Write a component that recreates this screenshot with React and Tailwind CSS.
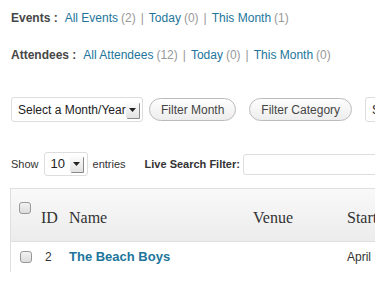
import React from "react";

function Count({ n }) {
  return <span className="ml-[3px] text-[#999]">({n})</span>;
}

function Sep() {
  return <span className="mx-[5px] text-[#999]">|</span>;
}

function Arrow() {
  return (
    <span className="flex h-[16px] w-[13px] shrink-0 items-center justify-center rounded-[1px] bg-gradient-to-b from-[#fdfdfd] to-[#e2e2e2] shadow-[1px_1px_0_#8a8a8a]">
      <svg width="7" height="4" viewBox="0 0 7 4">
        <path d="M0 0 L7 0 L3.5 4 Z" fill="#222" />
      </svg>
    </span>
  );
}

function Pill({ children }) {
  return (
    <button
      type="button"
      className="h-[23px] rounded-full border border-[#bbb] bg-gradient-to-b from-[#fefefe] to-[#ededed] px-[11px] text-[12px] text-[#464646]"
    >
      {children}
    </button>
  );
}

function Checkbox() {
  return (
    <span className="block h-[12px] w-[12px] rounded-[3px] border border-[#999] bg-gradient-to-b from-[#f2f2f2] to-[#dcdcdc]" />
  );
}

export default function App() {
  return (
    <div
      className="h-[288px] w-[375px] overflow-hidden bg-white text-[12px] text-[#333]"
      style={{ fontFamily: '"Liberation Sans", Arial, sans-serif' }}
    >
      <div className="pl-[11px] pt-[10px]">
        {/* event links */}
        <div className="flex h-[16px] items-center whitespace-nowrap">
          <b className="mr-[7px] text-[#464646]">Events :</b>
          <a className="text-[#21759b]">All Events</a>
          <Count n="2" />
          <Sep />
          <a className="text-[#21759b]">Today</a>
          <Count n="0" />
          <Sep />
          <a className="text-[#21759b]">This Month</a>
          <Count n="1" />
        </div>
        <div className="mt-[21px] flex h-[16px] items-center whitespace-nowrap">
          <b className="mr-[7px] text-[#464646]">Attendees :</b>
          <a className="text-[#21759b]">All Attendees</a>
          <Count n="12" />
          <Sep />
          <a className="text-[#21759b]">Today</a>
          <Count n="0" />
          <Sep />
          <a className="text-[#21759b]">This Month</a>
          <Count n="0" />
        </div>

        {/* filters */}
        <div className="mt-[34px] flex items-center whitespace-nowrap">
          <div className="flex h-[25px] w-[132px] shrink-0 items-center justify-between rounded-[3px] border border-[#ddd] bg-white pl-[6px] pr-[4px] text-[12px] text-[#222]">
            <span>Select a Month/Year</span>
            <Arrow />
          </div>
          <div className="ml-[6px]">
            <Pill>Filter Month</Pill>
          </div>
          <div className="ml-[13px]">
            <Pill>Filter Category</Pill>
          </div>
          <div className="ml-[13px] flex h-[25px] w-[120px] shrink-0 items-center rounded-[3px] border border-[#ddd] pl-[6px] text-[#222]">
            Select Category
          </div>
        </div>

        {/* show entries */}
        <div className="mt-[30px] flex items-center whitespace-nowrap text-[11px]">
          <span className="text-[#333]">Show</span>
          <div className="ml-[5px] flex h-[24px] w-[44px] shrink-0 items-center justify-between rounded-[3px] border border-[#ddd] pl-[6px] pr-[4px] text-[13px] text-[#222]">
            <span>10</span>
            <Arrow />
          </div>
          <span className="ml-[5px] text-[#333]">entries</span>
          <b className="ml-[19px] text-[#333]">Live Search Filter:</b>
          <div className="ml-[3px] h-[21px] w-[200px] shrink-0 rounded-[3px] border border-[#ddd] bg-white" />
        </div>
      </div>

      {/* table */}
      <div className="ml-[10px] mt-[12px] w-[420px] border-l border-t border-[#dfdfdf]">
        <div
          className="flex h-[53px] items-center border-b border-[#dfdfdf] bg-gradient-to-b from-[#f9f9f9] to-[#ececec] pt-[5px] text-[16px] text-[#333]"
          style={{ fontFamily: '"Liberation Serif", Georgia, serif' }}
        >
          <div className="flex w-[27px] justify-center self-start pt-[8px]">
            <Checkbox />
          </div>
          <div className="w-[31px] pl-[3px]">ID</div>
          <div className="w-[184px]">Name</div>
          <div className="w-[94px]">Venue</div>
          <div>Start Date</div>
        </div>
        <div className="flex h-[30px] items-center">
          <div className="flex w-[29px] justify-center">
            <Checkbox />
          </div>
          <div className="w-[29px] pl-[5px] text-[12px] text-[#333]">2</div>
          <div className="w-[184px] text-[13px] font-bold text-[#21759b]">The Beach Boys</div>
          <div className="w-[94px]" />
          <div className="text-[12px] text-[#333]">April</div>
        </div>
      </div>
    </div>
  );
}
